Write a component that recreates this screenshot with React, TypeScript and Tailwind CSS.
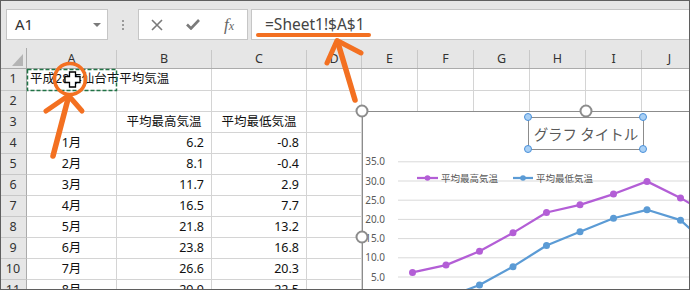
import React from 'react';

const cellFont = "font-['Noto_Sans','Noto_Sans_CJK_JP',sans-serif]";

const colWidths = ['w-[90px]', 'w-[95px]', 'w-[95px]', 'w-[55px]', 'w-[56px]', 'w-[56px]', 'w-[56px]', 'w-[56px]', 'w-[56px]', 'w-[56px]'];
const letters = ['A', 'B', 'C', 'D', 'E', 'F', 'G', 'H', 'I', 'J'];

const data: string[][] = [
    ['平成28年仙台市平均気温', '', ''],
    ['', '', ''],
    ['', '平均最高気温', '平均最低気温'],
    ['1月', '6.2', '-0.8'],
    ['2月', '8.1', '-0.4'],
    ['3月', '11.7', '2.9'],
    ['4月', '16.5', '7.7'],
    ['5月', '21.8', '13.2'],
    ['6月', '23.8', '16.8'],
    ['7月', '26.6', '20.3'],
    ['8月', '29.9', '22.5'],
];

const highs = [6.2, 8.1, 11.7, 16.5, 21.8, 23.8, 26.6, 29.9, 25.6, 20.5];
const lows = [-0.8, -0.4, 2.9, 7.7, 13.2, 16.8, 20.3, 22.5, 19.8, 12];

const px = (i: number) => 50.5 + i * 33.5;
const py = (v: number) => 185.2 - v * 3.84;

function Cell({ row, col, text }: { row: number; col: number; text: string }) {
    let align = 'justify-center';
    if (row === 0 && col === 0) align = 'justify-start pl-[3px]';
    else if (row >= 3 && col > 0) align = 'justify-end pr-[7px]';
    const noRight = row === 0 && col === 0;
    return (
        <div
            className={`${colWidths[col]} shrink-0 h-full flex items-center ${align} border-b border-[#d4d4d4] ${noRight ? '' : 'border-r'} whitespace-nowrap overflow-visible text-[12.5px] text-[#111]`}
        >
            {text}
        </div>
    );
}

function Chart() {
    const highPath = highs.map((v, i) => `${i === 0 ? 'M' : 'L'}${px(i)} ${py(v)}`).join(' ');
    const lowPath = lows.map((v, i) => `${i === 0 ? 'M' : 'L'}${px(i)} ${py(v)}`).join(' ');
    return (
        <div className="absolute left-[362px] top-[111px] w-[448px] h-[252px]">
            <svg width="448" height="252" className="absolute left-0 top-0">
                <rect x="0.5" y="0.5" width="447" height="251" fill="#fff" stroke="#8c8c8c" />
                {[5, 10, 15, 20, 25, 30, 35].map((v) => (
                    <g key={v}>
                        <line x1="36" x2="448" y1={py(v)} y2={py(v)} stroke="#d9d9d9" strokeWidth="1" />
                        <text x="23" y={py(v) + 3.5} textAnchor="end" fontSize="10" fill="#595959" fontFamily="Noto Sans, sans-serif">
                            {v.toFixed(1)}
                        </text>
                    </g>
                ))}
                <line x1="55" x2="76" y1="67" y2="67" stroke="#b35ed6" strokeWidth="2.25" />
                <circle cx="65.5" cy="67" r="2.8" fill="#b35ed6" />
                <text x="79" y="70.5" fontSize="9.5" fill="#595959" fontFamily="Noto Sans CJK JP, sans-serif">平均最高気温</text>
                <line x1="151" x2="171" y1="67" y2="67" stroke="#5b9bd5" strokeWidth="2.25" />
                <circle cx="161" cy="67" r="2.8" fill="#5b9bd5" />
                <text x="174" y="70.5" fontSize="9.5" fill="#595959" fontFamily="Noto Sans CJK JP, sans-serif">平均最低気温</text>
                <path d={highPath} fill="none" stroke="#b35ed6" strokeWidth="2.25" strokeLinejoin="round" />
                {highs.map((v, i) => <circle key={i} cx={px(i)} cy={py(v)} r="3.5" fill="#b35ed6" />)}
                <path d={lowPath} fill="none" stroke="#5b9bd5" strokeWidth="2.25" strokeLinejoin="round" />
                {lows.map((v, i) => <circle key={i} cx={px(i)} cy={py(v)} r="3.5" fill="#5b9bd5" />)}
            </svg>
            <div className="absolute left-[166px] top-[6px] w-[116px] h-[33px] border border-[#8c8c8c] flex items-center justify-center text-[14.5px] text-[#595959] font-['Noto_Sans_CJK_JP',sans-serif] whitespace-nowrap">
                グラフ タイトル
            </div>
        </div>
    );
}

export default function App() {
    return (
        <div className={`relative w-[690px] h-[290px] overflow-hidden bg-white ${cellFont}`}>
            {/* formula bar */}
            <div className="h-[48px] bg-[#e6e6e6] flex items-start pt-[9px]">
                <div className="ml-[6px] w-[102px] h-[31px] bg-white border border-[#c6c6c6] flex items-center justify-between pl-[8px] pr-[6px]">
                    <span className="text-[15px] text-[#333] font-['Noto_Sans',sans-serif]">A1</span>
                    <svg width="8" height="4" viewBox="0 0 8 4"><path d="M0 0h8L4 4z" fill="#7a7a7a" /></svg>
                </div>
                <div className="w-[30px] h-[31px] flex flex-col items-center justify-center gap-[2px]">
                    <span className="w-[2px] h-[2px] bg-[#9a9a9a]" />
                    <span className="w-[2px] h-[2px] bg-[#9a9a9a]" />
                    <span className="w-[2px] h-[2px] bg-[#9a9a9a]" />
                </div>
                <div className="w-[110px] h-[31px] bg-white border border-[#c6c6c6] grid grid-cols-3 items-center justify-items-center">
                    <svg width="12" height="12" viewBox="0 0 12 12">
                        <path d="M1 1L11 11M11 1L1 11" stroke="#7a7a7a" strokeWidth="1.6" />
                    </svg>
                    <svg width="14" height="11" viewBox="0 0 14 11">
                        <path d="M1 5.5L5 9.5L13 1" stroke="#7a7a7a" strokeWidth="2.6" fill="none" />
                    </svg>
                    <span className="italic text-[17px] text-[#666] font-['Liberation_Serif',serif] leading-none">
                        f<span className="text-[12px]">x</span>
                    </span>
                </div>
                <div className="ml-[3px] flex-1 h-[31px] bg-white border border-[#c6c6c6] flex items-center pl-[13px]">
                    <span className="text-[15.5px] text-[#444] font-['Noto_Sans',sans-serif]">=Sheet1!$A$1</span>
                </div>
            </div>

            {/* column headers */}
            <div className="flex h-[21px] bg-[#e6e6e6] border-b border-[#ababab]">
                <div className="w-[27px] shrink-0 flex items-end justify-end pr-[3px] pb-[2px] border-r border-[#ababab]">
                    <svg width="11" height="12" viewBox="0 0 11 12"><path d="M11 0V12H0z" fill="#b4b4b4" /></svg>
                </div>
                {letters.map((l, i) => (
                    <div key={l} className={`${colWidths[i]} shrink-0 flex items-end`}>
                        <div className="w-full h-[18px] border-r border-[#c8c8c8] flex items-center justify-center text-[12.5px] text-[#333]">
                            {l}
                        </div>
                    </div>
                ))}
            </div>

            {/* rows */}
            {data.map((r, ri) => (
                <div key={ri} className={`flex ${ri === 0 ? 'h-[22px]' : 'h-[21px]'}`}>
                    <div className="w-[27px] shrink-0 bg-[#e6e6e6] border-r border-b border-r-[#ababab] border-b-[#c8c8c8] flex items-center justify-center text-[12.5px] text-[#333]">
                        {ri + 1}
                    </div>
                    {letters.map((_, ci) => (
                        <Cell key={ci} row={ri} col={ci} text={ci < 3 ? r[ci] : ''} />
                    ))}
                </div>
            ))}

            <Chart />

            {/* overlays: selection, handles, annotations */}
            <svg width="690" height="290" className="absolute left-0 top-0 pointer-events-none">
                <rect x="27.5" y="69.5" width="89" height="21" fill="none" stroke="#217346" strokeWidth="1.5" strokeDasharray="4 2" />

                {[[362, 111], [586, 111], [362, 237]].map(([x, y], i) => (
                    <circle key={i} cx={x} cy={y} r="5.5" fill="#fff" stroke="#8c8c8c" strokeWidth="2" />
                ))}
                {[[528, 117], [643, 117], [528, 149], [643, 149]].map(([x, y], i) => (
                    <circle key={i} cx={x} cy={y} r="3.5" fill="#a9d0f5" stroke="#4a90d9" strokeWidth="1" />
                ))}

                <circle cx="70" cy="79" r="15.5" fill="none" stroke="#f37021" strokeWidth="3.5" />
                <polygon
                    points="69.5,72 75.5,72 75.5,76.5 80,76.5 80,82.5 75.5,82.5 75.5,87 69.5,87 69.5,82.5 65,82.5 65,76.5 69.5,76.5"
                    fill="#fff"
                    stroke="#000"
                    strokeWidth="1.3"
                />
                <line x1="53" y1="156" x2="68.5" y2="97" stroke="#f37021" strokeWidth="5.5" strokeLinecap="round" />
                <polyline points="46,111 68.5,95.5 82,111" fill="none" stroke="#f37021" strokeWidth="5" strokeLinecap="round" strokeLinejoin="round" />

                <line x1="258" y1="35" x2="369" y2="35" stroke="#f37021" strokeWidth="4" strokeLinecap="round" />
                <line x1="355" y1="100" x2="338" y2="43" stroke="#f37021" strokeWidth="5.5" strokeLinecap="round" />
                <polyline points="327,63 337,40.5 361,53" fill="none" stroke="#f37021" strokeWidth="5" strokeLinecap="round" strokeLinejoin="round" />
            </svg>

            <div className="absolute inset-0 border border-[#5f5f5f] pointer-events-none" />
        </div>
    );
}
